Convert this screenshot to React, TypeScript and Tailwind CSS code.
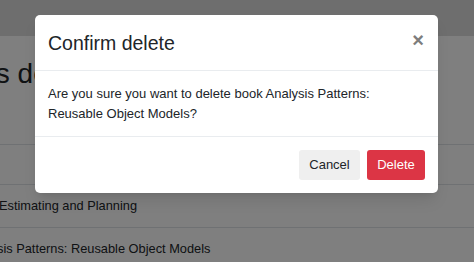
import React from 'react';

const rows = [
  { title: 'Agile Estimating and Planning', shift: '-ml-[33px]' },
  { title: 'Analysis Patterns: Reusable Object Models', shift: '-ml-[35px]' },
];

export default function App() {
  return (
    <div
      className="relative w-[474px] h-[262px] overflow-hidden bg-white text-[#212529]"
      style={{ fontFamily: '"Liberation Sans", Arial, sans-serif' }}
    >
      {/* page behind the dialog */}
      <div className="h-[36px] bg-[#dddddd]" />
      <div className="h-[108px] pt-[22px]">
        <h1 className="-ml-[68px] text-[28px] leading-[32px] whitespace-nowrap">Books details</h1>
      </div>
      <div className="border-t border-[#dee2e6] h-[40px]" />
      {rows.map((r) => (
        <div key={r.title} className="border-t border-[#dee2e6] h-[43px] flex items-center">
          <div className={`${r.shift} text-[12.8px] whitespace-nowrap`}>{r.title}</div>
        </div>
      ))}

      {/* backdrop */}
      <div className="absolute inset-0 bg-black/50" />

      {/* dialog */}
      <div className="absolute left-[35px] top-[15px] w-[403px] bg-white rounded-[5px] shadow-lg flex flex-col">
        <div className="h-[56px] px-[13px] flex items-start justify-between border-b border-[#e9ecef]">
          <h5 className="mt-[16px] text-[19.5px] leading-[24px] text-[#212529]">Confirm delete</h5>
          <button className="mt-[15px] mr-[1px] text-[20px] leading-[20px] font-bold text-[#7d7d7d]">×</button>
        </div>
        <div className="px-[13px] pt-[13px] pb-[12px] text-[13px] leading-[20px] text-[#212529] border-b border-[#e9ecef]">
          Are you sure you want to delete book Analysis Patterns: Reusable Object Models?
        </div>
        <div className="h-[56px] px-[13px] flex items-center justify-end gap-[7px]">
          <button className="w-[61px] h-[30px] rounded-[3px] bg-[#efefef] text-[13px] text-[#212529]">Cancel</button>
          <button className="w-[58px] h-[30px] rounded-[3px] bg-[#dc3545] text-[13px] text-white">Delete</button>
        </div>
      </div>
    </div>
  );
}
